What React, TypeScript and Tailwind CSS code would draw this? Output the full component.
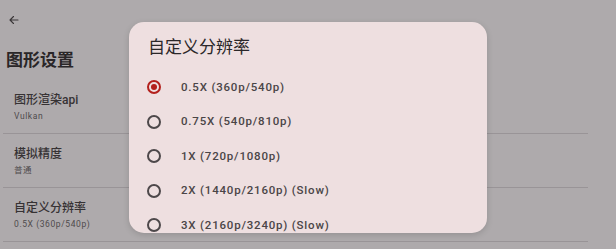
import React from "react";

const font = { fontFamily: "Roboto, 'Noto Sans CJK SC', sans-serif" };

const items = [
  { t: "图形渲染api", s: "Vulkan" },
  { t: "模拟精度", s: "普通" },
  { t: "自定义分辨率", s: "0.5X (360p/540p)" },
];

const options = [
  "0.5X (360p/540p)",
  "0.75X (540p/810p)",
  "1X (720p/1080p)",
  "2X (1440p/2160p) (Slow)",
  "3X (2160p/3240p) (Slow)",
];

export default function App() {
  return (
    <div
      className="relative w-[616px] h-[249px] overflow-hidden bg-[#aeaaac] text-[#2f2b2d]"
      style={font}
    >
      <div className="flex flex-col">
        <div className="h-[40px] flex items-center pl-[8px]">
          <svg width="12" height="12" viewBox="0 0 24 24" fill="none" stroke="#3a3638" strokeWidth="2.2" strokeLinecap="round" strokeLinejoin="round">
            <path d="M20 12H4M11 5l-7 7 7 7" />
          </svg>
        </div>
        <div className="h-[40px] flex items-center pl-[6px] pt-[2px] text-[17px] font-bold text-[#2a2628]">图形设置</div>
        <div className="flex flex-col w-[585px] ml-[3px]">
          {items.map((it) => (
            <div key={it.t} className="h-[54px] flex flex-col justify-center pl-[11px] border-b border-[#999497] pt-[3px]">
              <div className="text-[12px] leading-[16px] font-medium text-[#363234]">{it.t}</div>
              <div className="text-[8.5px] leading-[16px] tracking-[0.6px] text-[#4f4a4c]">{it.s}</div>
            </div>
          ))}
        </div>
      </div>

      <div className="absolute left-[129px] top-[22px] w-[358px] h-[211px] overflow-hidden rounded-[15px] bg-[#eedfe0] shadow-[0_2px_6px_rgba(0,0,0,0.15)] flex flex-col">
        <div className="shrink-0 pl-[19px] pt-[14px] h-[48px] text-[17px] leading-[22px] text-[#2b2729]">自定义分辨率</div>
        <div className="shrink-0 flex flex-col">
          {options.map((o, i) => (
            <div key={o} className="shrink-0 h-[34.5px] flex items-center pl-[18px]">
              <div
                className={
                  "w-[14px] h-[14px] rounded-full border-[2px] flex items-center justify-center " +
                  (i === 0 ? "border-[#b3201c]" : "border-[#4d484a]")
                }
              >
                {i === 0 && <div className="w-[6px] h-[6px] rounded-full bg-[#b3201c]" />}
              </div>
              <div className="ml-[20px] text-[11.5px] font-medium tracking-[0.8px] text-[#4a4547]">{o}</div>
            </div>
          ))}
        </div>
      </div>
    </div>
  );
}
